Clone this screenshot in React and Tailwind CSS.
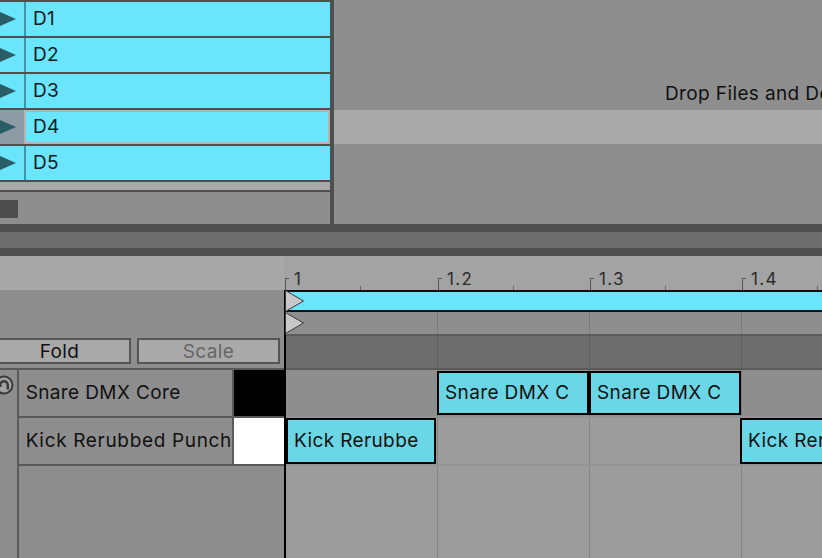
import React from 'react';

const CLIPS = ['D1', 'D2', 'D3', 'D4', 'D5'];

const PlayTriangle = () => (
    <svg width="24" height="34" viewBox="0 0 24 34">
        <polygon points="-2,9 16,17 -2,25" fill="#2b5d68" />
    </svg>
);

const Marker = () => (
    <svg width="20" height="22" viewBox="0 0 20 22" className="shrink-0">
        <polygon points="0.5,0.5 18.5,11 0.5,21.5" fill="#c8c8c8" stroke="#3a3a3a" strokeWidth="1" />
    </svg>
);

const SessionRow = ({ name, selected }) => (
    <div className="flex h-[34px] border-b-2 border-[#4f4f4f] box-content">
        <div className={`w-[24px] flex items-center ${selected ? 'bg-[#8d9ba5]' : 'bg-[#6be5fb]'}`}>
            <PlayTriangle />
        </div>
        <div className={`w-[2px] ${selected ? 'bg-[#b3b3b3]' : 'bg-[#3d97a5]'}`} />
        <div className={`flex-1 flex items-center pl-[7px] pt-px bg-[#6be5fb] text-[19px] tracking-[0.02em] text-[#0e1a1e] ${selected ? 'border-2 border-l-0 border-[#b3b3b3]' : ''}`}>
            {name}
        </div>
    </div>
);

const Clip = ({ label, left, width, top = 0, bottom = 0 }) => (
    <div
        className="absolute bg-[#6bd6e6] border-2 border-black flex items-center pl-[6px] pt-px text-[19px] tracking-[0.02em] text-[#111] whitespace-nowrap overflow-hidden"
        style={{ left, width, top, bottom }}
    >
        {label}
    </div>
);

// arrangement background cells, grid lines on the left of bars 2..4
const GridCells = ({ line }) => (
    <div className="absolute inset-0 flex">
        <div className="w-[151px]" />
        <div className={`w-[152px] border-l ${line}`} />
        <div className={`w-[152px] border-l ${line}`} />
        <div className={`flex-1 border-l ${line}`} />
    </div>
);

const RULER = [
    { label: '1', w: 'w-[153px]' },
    { label: '1.2', w: 'w-[152px]' },
    { label: '1.3', w: 'w-[152px]' },
    { label: '1.4', w: 'flex-1' },
];

const App = () => {
    return (
        <div className="w-[822px] h-[558px] overflow-hidden bg-[#8e8e8e] flex flex-col font-['Inter',sans-serif] select-none">
            {/* Session view */}
            <div className="h-[224px] flex shrink-0">
                <div className="w-[330px] flex flex-col border-t-2 border-[#4f4f4f]">
                    {CLIPS.map(c => (
                        <SessionRow key={c} name={c} selected={c === 'D4'} />
                    ))}
                    <div className="h-[8px] bg-[#a9a9a9]" />
                    <div className="h-[2px] bg-[#4f4f4f]" />
                    <div className="flex-1 pt-[8px]">
                        <div className="w-[18px] h-[18px] bg-[#4d4d4d]" />
                    </div>
                </div>
                <div className="w-[4px] bg-[#4f4f4f]" />
                <div className="flex-1 flex flex-col overflow-hidden">
                    <div className="h-[110px] flex items-end pb-[5px] pl-[331px]">
                        <span className="text-[19px] tracking-[0.02em] leading-[22px] text-[#111] whitespace-nowrap">Drop Files and Devices Here</span>
                    </div>
                    <div className="h-[34px] bg-[#a9a9a9]" />
                    <div className="flex-1" />
                </div>
            </div>

            {/* Splitter */}
            <div className="h-[8px] bg-[#4f4f4f] shrink-0" />
            <div className="h-[16px] bg-[#6e6e6e] shrink-0" />
            <div className="h-[8px] bg-[#4f4f4f] shrink-0" />

            {/* Arrangement */}
            <div className="flex-1 flex min-h-0">
                {/* Track headers */}
                <div className="w-[284px] flex flex-col">
                    <div className="h-[34px] bg-[#a8a8a8]" />
                    <div className="h-[78px] pt-[48px] flex gap-[6px] -ml-[12px] pr-[4px]">
                        <button className="w-[143px] h-[26px] border-2 border-[#555] bg-[#a9a9a9] text-[19px] tracking-[0.02em] leading-none text-[#111] flex items-center justify-center">
                            Fold
                        </button>
                        <button className="flex-1 h-[26px] border-2 border-[#555] bg-[#a9a9a9] text-[19px] tracking-[0.02em] leading-none text-[#666] flex items-center justify-center">
                            Scale
                        </button>
                    </div>
                    <div className="flex-1 flex flex-col">
                        <div className="h-[2px] bg-[#595959]" />
                        <div className="flex-1 flex">
                            <div className="w-[18px] pt-[5px] overflow-hidden">
                                <svg width="18" height="22" viewBox="0 0 18 22">
                                    <circle cx="4" cy="10" r="8.5" fill="#a2a2a2" stroke="#3c3c3c" strokeWidth="2" />
                                    <path d="M-1 12 v-2 a5 5 0 0 1 10 0 v4.5 h-2.5 v-4.5 a2.5 2.5 0 0 0 -5 0 v2 z" fill="#3c3c3c" />
                                </svg>
                            </div>
                            <div className="w-[2px] bg-[#595959]" />
                            <div className="flex-1 flex flex-col">
                                <div className="h-[46px] flex">
                                    <div className="flex-1 flex items-center pl-[7px] pt-px text-[19px] tracking-[0.02em] text-[#111] whitespace-nowrap overflow-hidden">Snare DMX Core</div>
                                    <div className="w-[2px] bg-[#595959]" />
                                    <div className="w-[50px] bg-black" />
                                </div>
                                <div className="h-[2px] bg-[#595959]" />
                                <div className="h-[46px] flex">
                                    <div className="flex-1 flex items-center pl-[7px] pt-px text-[19px] tracking-[0.035em] text-[#111] whitespace-nowrap overflow-hidden">Kick Rerubbed Punch</div>
                                    <div className="w-[2px] bg-[#595959]" />
                                    <div className="w-[50px] bg-white" />
                                </div>
                                <div className="h-[2px] bg-[#595959]" />
                                <div className="flex-1" />
                            </div>
                        </div>
                    </div>
                </div>

                {/* Timeline */}
                <div className="flex-1 flex flex-col overflow-hidden">
                    <div className="h-[34px] bg-[#a3a3a3] flex shrink-0">
                        {RULER.map(r => (
                            <div key={r.label} className={`${r.w} relative flex`}>
                                <div className="absolute left-[1px] top-[22px] w-[4px] h-[12px] border-l border-t border-[#555]" />
                                <div className="absolute left-[76px] top-[30px] w-px h-[4px] bg-[#666]" />
                                <span className="pl-[10px] pt-[12px] text-[17px] tracking-[0.08em] leading-[22px] text-[#2b2b2b]">{r.label}</span>
                            </div>
                        ))}
                    </div>
                    <div className="flex-1 flex flex-col border-l-2 border-black">
                        <div className="h-[18px] relative bg-[#6be5fa] border-y-2 border-[#111] box-content shrink-0">
                            <div className="absolute -left-[1px] -top-[2px]"><Marker /></div>
                        </div>
                        <div className="h-[22px] relative bg-[#8e8e8e] shrink-0">
                            <GridCells line="border-[#7a7a7a]" />
                            <div className="absolute -left-[1px] top-0"><Marker /></div>
                        </div>
                        <div className="h-[2px] bg-[#5c5c5c] shrink-0" />
                        <div className="h-[32px] relative bg-[#6e6e6e] shrink-0">
                            <GridCells line="border-[#5e5e5e]" />
                        </div>
                        <div className="h-[2px] bg-[#5a5a5a] shrink-0" />
                        <div className="h-[46px] relative bg-[#8e8e8e] shrink-0">
                            <GridCells line="border-[#7a7a7a]" />
                            <Clip label="Snare DMX C" left={151} width={152} top={1} bottom={1} />
                            <Clip label="Snare DMX C" left={303} width={152} top={1} bottom={1} />
                        </div>
                        <div className="h-[2px] bg-[#939393] shrink-0" />
                        <div className="h-[46px] relative bg-[#9c9c9c] shrink-0">
                            <GridCells line="border-[#858585]" />
                            <Clip label="Kick Rerubbe" left={0} width={150} />
                            <Clip label="Kick Rerubbed Punch" left={454} width={200} />
                        </div>
                        <div className="h-[2px] bg-[#939393] shrink-0" />
                        <div className="flex-1 relative bg-[#9c9c9c]">
                            <GridCells line="border-[#858585]" />
                        </div>
                    </div>
                </div>
            </div>
        </div>
    );
};

export default App;
